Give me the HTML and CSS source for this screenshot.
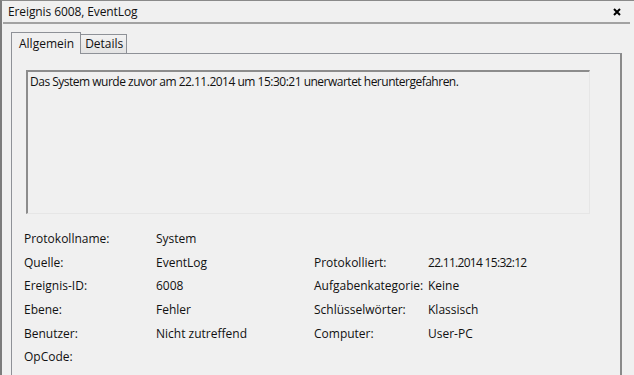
FILE: index.html
```html
<!DOCTYPE html>
<html lang="de">
<head>
  <meta charset="UTF-8">
  <title>Ereignis 6008, EventLog</title>
  <link rel="stylesheet" href="styles.css">
</head>
<body>
  <div class="window">
    <div class="titlebar">
      <span class="title">Ereignis 6008, EventLog</span>
      <svg class="close" width="8" height="8" viewBox="0 0 8 8">
        <path d="M1 1 L7 7 M7 1 L1 7" stroke="#000" stroke-width="2" />
      </svg>
    </div>

    <div class="tabs">
      <div class="tab active">Allgemein</div>
      <div class="tab">Details</div>
    </div>

    <div class="panel">
      <div class="message">Das System wurde zuvor am 22.11.2014 um 15:30:21 unerwartet heruntergefahren.</div>

      <div class="fields">
        <span class="label">Protokollname:</span>
        <span class="value">System</span>
        <span></span>
        <span></span>

        <span class="label">Quelle:</span>
        <span class="value">EventLog</span>
        <span class="label">Protokolliert:</span>
        <span class="value date">22.11.2014 15:32:12</span>

        <span class="label">Ereignis-ID:</span>
        <span class="value">6008</span>
        <span class="label">Aufgabenkategorie:</span>
        <span class="value">Keine</span>

        <span class="label">Ebene:</span>
        <span class="value">Fehler</span>
        <span class="label">Schlüsselwörter:</span>
        <span class="value">Klassisch</span>

        <span class="label">Benutzer:</span>
        <span class="value">Nicht zutreffend</span>
        <span class="label">Computer:</span>
        <span class="value">User-PC</span>

        <span class="label">OpCode:</span>
        <span class="value"></span>
        <span></span>
        <span></span>
      </div>
    </div>
  </div>
</body>
</html>
```

FILE: styles.css
```css
/* Window */
body {
  margin: 0;
  background: #f0f0f0;
  font-family: 'Open Sans', 'Noto Sans', sans-serif;
  font-size: 12px;
  color: #111;
  overflow: hidden;
}

.window {
  height: 375px;
  border-top: 1px solid #8a8a8a;
  border-left: 2px solid #7c7c7c;
  box-sizing: border-box;
}

.titlebar {
  display: flex;
  align-items: center;
  justify-content: space-between;
  height: 21px;
  margin-left: 1px;
  margin-right: 4px;
  padding: 0 9px 0 5px;
  border-bottom: 2px solid #a2a2a2;
  letter-spacing: -0.1px;
}

.close {
  display: block;
  margin-top: 1px;
}

/* Tabs */
.tabs {
  display: flex;
  align-items: flex-end;
  margin-left: 9px;
  padding-top: 7px;
  height: 22px;
}

.tab {
  height: 18px;
  padding: 0 3px 0 4px;
  border: 1px solid #8e9197;
  border-bottom: none;
  background: linear-gradient(#f2f2f2, #e3e3e3);
  line-height: 17px;
}

.tab.active {
  height: 21px;
  padding: 0 6px 0 7px;
  background: #f0f0f0;
  margin-bottom: -1px;
  position: relative;
  z-index: 1;
  line-height: 22px;
}

.tab + .tab {
  border-left: none;
}

/* Panel */
.panel {
  margin-left: 9px;
  width: 611px;
  height: 330px;
  border: 1px solid #8e9197;
  border-right: 2px solid #8a8a8a;
  border-bottom: none;
  padding: 16px 0 0 14px;
  box-sizing: border-box;
}

.message {
  width: 564px;
  height: 144px;
  box-sizing: border-box;
  border-top: 2px solid #8c8c8c;
  border-left: 2px solid #8c8c8c;
  border-right: 1px solid #e6e6e6;
  border-bottom: 1px solid #e6e6e6;
  padding: 2px 0 0 2px;
  line-height: 16px;
  letter-spacing: -0.5px;
}

.fields {
  display: grid;
  grid-template-columns: 132px 158px 114px auto;
  grid-auto-rows: 23.6px;
  align-items: center;
  margin-top: 13px;
  margin-left: -2px;
}

.date {
  letter-spacing: -0.7px;
}
```
